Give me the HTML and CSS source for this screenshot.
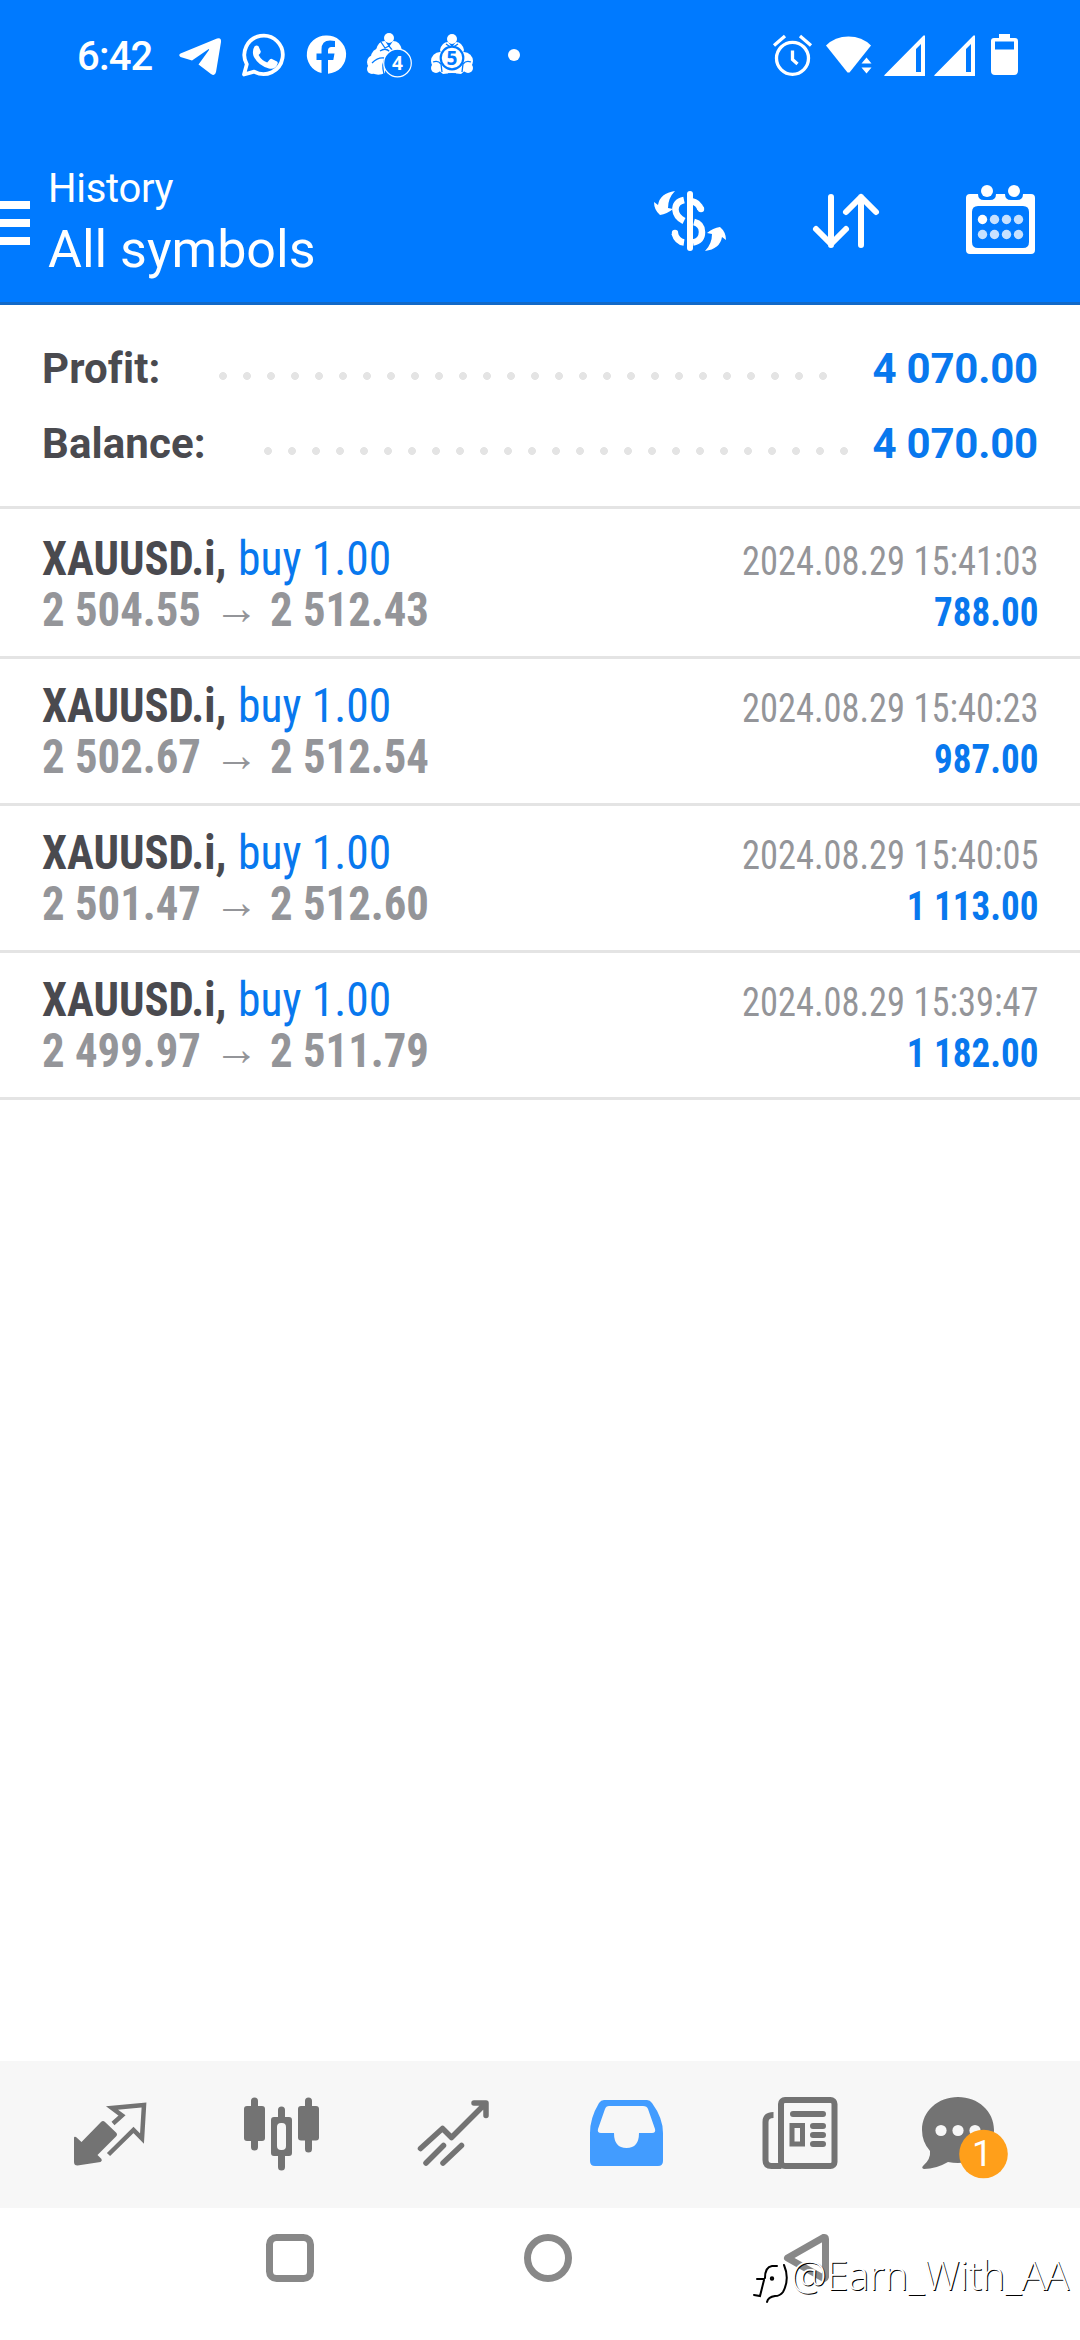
FILE: index.html
```html
<!DOCTYPE html>
<html lang="en">
<head>
<meta charset="utf-8">
<title>History</title>
<link rel="stylesheet" href="styles.css">
</head>
<body>
<header class="header">
  <div class="status">
    <span class="clock">6:42</span>
    <svg class="status-left" width="360" height="113" viewBox="170 0 360 113" fill="#fff">
      <path d="M180.500 53.500L217 38.500Q221.500 37 221 42L216 72Q215 76.500 211 74L198.500 64.500L209 50Q209.500 48.500 208 49.500L192 60.500L180.500 57Q178 55 180.500 53.500Z"/>
      <path d="M244 74.500l2.800-10.300a19.200 19.200 0 1 1 7.400 7.400z" fill="none" stroke="#fff" stroke-width="3.800" stroke-linejoin="round"/>
      <path d="M254.500 46.500q2-2 4-.2l2.300 5.200q.2 1.200-2.200 3.500q3 5.500 8.600 7.600l2.800-3.400q1-.8 2-.2l5 2.500q1 .6.600 2.200q-2 6-8.600 4.800q-11-3-15.500-12.500q-1.600-5.500 1-9.500z"/>
      <path d="M326 35.500a19 19 0 0 0-4.500 37.500V60h-5v-6.500h5v-4q0-9 8.500-9q3 0 5 .5v6h-3.500q-3.500 0-3.500 3.500v3h6.500l-1.200 6.500H328v13.700A19 19 0 0 0 326 35.500Z"/>
      <g>
        <circle cx="389" cy="38" r="5"/>
        <path d="M376 50q2-9 9-9l4 6 4-6q7 0 9 9l-2 7h-22z"/>
        <circle cx="380" cy="57" r="9"/><circle cx="374" cy="62" r="7"/><circle cx="372" cy="69" r="5"/>
        <path d="M371 58h14v15q-8 4-14-1z"/>
        <path d="M380 51q6-4 10 1M384 74q-3-10 2-17M381 42l4 6 4-2 4 5M372 63q6-6 12-5" fill="none" stroke="#007aff" stroke-width="1.300"/>
        <circle cx="397.500" cy="63" r="13.800" fill="#007aff" stroke="#fff" stroke-width="1.200"/>
        <text x="397.500" y="70" class="glyph">4</text>
      </g>
      <g>
        <circle cx="452" cy="39" r="5"/>
        <path d="M440 50q2-8 8-8l4 5 4-5q6 0 8 8l-3 9h-18z"/>
        <circle cx="440" cy="61" r="9"/><circle cx="464" cy="61" r="9"/>
        <circle cx="436" cy="68" r="5"/><circle cx="468" cy="68" r="5"/>
        <path d="M437 69l6 5 9-1 9 1 6-5-5-9h-20z"/>
        <path d="M433 62q5-2 8 2l1 8M471 62q-5-2-8 2l-1 8M446 44l6 4 6-4M448 74h8" fill="none" stroke="#007aff" stroke-width="1.300"/>
        <circle cx="452" cy="58" r="11.300" stroke="#007aff" stroke-width="2.200"/>
        <text x="452" y="65" class="glyph inverse">5</text>
      </g>
      <circle cx="514" cy="55" r="6"/>
    </svg>
    <svg class="status-right" width="260" height="113" viewBox="765 0 260 113" fill="#fff">
      <g fill="none" stroke="#fff" stroke-width="3.300">
        <circle cx="792.500" cy="58.300" r="16"/>
        <path d="M792.500 50.500v9l5 4.500M774 45.500l11-9.500M811 45.500l-11-9.500"/>
      </g>
      <path d="M826 45.500q9-9 22.500-9t22.500 9L849.500 72.500h-2z"/>
      <path d="M861.500 63.500l5-6 5 6zM861.500 67.500h10l-5 6z" stroke="#007aff" stroke-width="3"/>
      <path d="M861.500 63.500l5-6 5 6zM861.500 67.500h10l-5 6z"/>
      <path fill-rule="evenodd" d="M884 75.500L923.500 35.500h1.500v40.500H885zM916 49v23h5V44z"/>
      <path fill-rule="evenodd" d="M934 75.500L973.500 35.500h1.500v40.500H935zM966 49v23h5V44z"/>
      <path fill-rule="evenodd" d="M999 34h11v4h5q3 0 3 3v30q0 4-4 4h-19q-4 0-4-4v-30q0-3 3-3h5zM995 41.500v8h19v-8z"/>
    </svg>
  </div>
  <div class="toolbar">
    <div class="menu"><i></i><i></i><i></i></div>
    <div class="titles">
      <div class="subtitle">History</div>
      <h1 class="title">All symbols</h1>
    </div>
    <svg class="tools" width="430" height="189" viewBox="625 113 430 189" fill="none" stroke="#fff">
      <path d="M700.500 209.500q-1.500-7-9.500-8.500M684 200q-9 2-8.500 10q.5 7 8.500 11M694 222q8 2 8 10q0 9-9 10.500M684 242.500q-7-1-9.500-9.500" stroke-width="6.500" stroke-linecap="butt"/>
      <circle cx="701" cy="209" r="3.200" fill="#fff" stroke="none"/><circle cx="675" cy="233" r="3.200" fill="#fff" stroke="none"/>
      <path d="M690 194v54" stroke-width="6" stroke-linecap="round"/>
      <path d="M675 191q-15 2-17 14l-4-3q0 8 6 13q7-1 13-6l-5-1q0-10 7-17zM705 251q15-2 17-14l4 3q0-8-6-13q-7 1-13 6l5 1q0 10-7 17z" fill="#fff" stroke="none"/>
      <path d="M831 197v48M816 229l15 15 15-15M861 245v-48M846 212l15-15 15 15" stroke-width="6" stroke-linecap="round" stroke-linejoin="round"/>
      <g fill="#fff" stroke="none">
        <path fill-rule="evenodd" d="M970 194h8q0 6 6 6h6q6 0 6-6h9q0 6 6 6h6q6 0 6-6h8q4 0 4 4v52q0 4-4 4h-61q-4 0-4-4v-52q0-4 4-4zM978 206q-6 0-6 6v30q0 6 6 6h45q6 0 6-6v-30q0-6-6-6z"/>
        <circle cx="987" cy="191" r="6"/><circle cx="1014" cy="191" r="6"/>
        <circle cx="982.500" cy="219.500" r="4.700"/>
        <g opacity=".78"><circle cx="994.500" cy="219.500" r="4.700"/><circle cx="1006.500" cy="219.500" r="4.700"/><circle cx="1018.500" cy="219.500" r="4.700"/><circle cx="982.500" cy="234.500" r="4.700"/><circle cx="994.500" cy="234.500" r="4.700"/><circle cx="1006.500" cy="234.500" r="4.700"/><circle cx="1018.500" cy="234.500" r="4.700"/></g>
      </g>
    </svg>
  </div>
</header>

<section class="summary">
  <div class="line profit"><span class="label">Profit:</span><span class="leader"></span><span class="value">4 070.00</span></div>
  <div class="line balance"><span class="label">Balance:</span><span class="leader"></span><span class="value">4 070.00</span></div>
</section>

<main class="deals">
  <article class="deal">
    <div><div class="name"><b>XAUUSD.i,</b><span class="side">buy 1.00</span></div><div class="prices"><span class="open">2 504.55</span><span class="arrow">→</span><span class="close">2 512.43</span></div></div>
    <div class="result"><div class="date">2024.08.29 15:41:03</div><div class="amount">788.00</div></div>
  </article>
  <article class="deal">
    <div><div class="name"><b>XAUUSD.i,</b><span class="side">buy 1.00</span></div><div class="prices"><span class="open">2 502.67</span><span class="arrow">→</span><span class="close">2 512.54</span></div></div>
    <div class="result"><div class="date">2024.08.29 15:40:23</div><div class="amount">987.00</div></div>
  </article>
  <article class="deal">
    <div><div class="name"><b>XAUUSD.i,</b><span class="side">buy 1.00</span></div><div class="prices"><span class="open">2 501.47</span><span class="arrow">→</span><span class="close">2 512.60</span></div></div>
    <div class="result"><div class="date">2024.08.29 15:40:05</div><div class="amount">1 113.00</div></div>
  </article>
  <article class="deal">
    <div><div class="name"><b>XAUUSD.i,</b><span class="side">buy 1.00</span></div><div class="prices"><span class="open">2 499.97</span><span class="arrow">→</span><span class="close">2 511.79</span></div></div>
    <div class="result"><div class="date">2024.08.29 15:39:47</div><div class="amount">1 182.00</div></div>
  </article>
</main>

<nav class="tabs">
  <svg viewBox="24 2061 172 147" fill="#737373">
    <path d="M74 2138q0-2 2-1l5.500 5L101 2122q2-2 4 0l11 10.500q2 2 0 4L97.500 2155l4 4q1 2-1 3l-23 3.500q-3.500 0-3.500-3.500z"/>
    <path d="M113 2123.500l9-8-10-7.500 32-3-2 33.500-8.500-8.500-25 24.500" fill="none" stroke="#737373" stroke-width="4.500"/>
  </svg>
  <svg viewBox="196 2061 172 147" fill="#737373">
    <path d="M254.500 2101v46M308.500 2101v48M281.500 2110v12M281.500 2154v13" stroke="#737373" stroke-width="7" stroke-linecap="round"/>
    <rect x="244" y="2106" width="21" height="35" rx="3"/><rect x="298" y="2106" width="21" height="34.500" rx="3"/>
    <path fill="#f7f7f7" d="M276 2120h11v33h-11z"/>
    <path fill-rule="evenodd" d="M274 2117h15q3 0 3 3v33q0 3-3 3h-15q-3 0-3-3v-33q0-3 3-3zM281 2123q-4 0-4 4v19q0 4 4 4h1q4 0 4-4v-19q0-4-4-4z"/>
  </svg>
  <svg viewBox="368 2061 172 147" fill="none" stroke="#737373" stroke-width="5.500" stroke-linecap="round" stroke-linejoin="round">
    <path d="M420.500 2148.500L442.500 2128.500L451.500 2137.500L485 2104M474 2103h12v12.500"/>
    <path d="M426 2163L443.500 2145.500M443 2163L461.500 2145.500"/>
  </svg>
  <svg viewBox="540 2061 172 147">
    <path fill="#429cff" fill-rule="evenodd" d="M604 2100h43q3 0 5 3q11 15 11 30v28q0 5-5 5h-63q-5 0-5-5v-28q0-15 9-30q2-3 5-3zM609 2106q-3 0-4 3l-7 20q-1 4 3 4h13q0 15 12.500 15t12.500-15h13q4 0 3-4l-7-20q-1-3-5-3z"/>
  </svg>
  <svg viewBox="712 2061 172 147" fill="none" stroke="#737373" stroke-width="6">
    <rect x="781" y="2100" width="53.500" height="66" rx="4"/>
    <path d="M773.500 2115q-8 0-8 7v38q0 6 6 6h10"/>
    <path d="M793 2114h30M813 2126h10M813 2135h10M813 2144h10" stroke-linecap="round"/>
    <rect x="792" y="2125.500" width="10.500" height="18.500" stroke-width="5"/>
  </svg>
  <svg viewBox="884 2061 172 147">
    <path fill="#737373" d="M958 2097c20 0 36 14 36 33s-16 33-36 33q-5 0-10-1q-12 7-24 7q-3-1-1-3q8-7 7-15q-8-9-8-21c0-19 16-33 36-33z"/>
    <g fill="#f7f7f7"><circle cx="941" cy="2130.500" r="5.600"/><circle cx="958" cy="2130.500" r="5.600"/><circle cx="975" cy="2130.500" r="5.600"/></g>
    <circle cx="983.500" cy="2154" r="24.300" fill="#ff9f1a"/>
    <text x="982" y="2166" class="badge">1</text>
  </svg>
</nav>

<footer class="system">
  <svg width="1080" height="132" viewBox="0 2208 1080 132" fill="none" stroke="#888" stroke-width="7">
    <rect x="269.500" y="2237.500" width="41" height="41" rx="7"/>
    <circle cx="548" cy="2258" r="20.500"/>
    <path d="M787.500 2258L823.500 2237.500Q825.500 2237 825.500 2239V2277Q825 2279 823 2278Z" stroke-linejoin="round"/>
    <g class="mark">
      <path d="M777 2266h-5q-7 1-7 12M757 2279h7M764 2280l-4 16-6-1M784 2265q6 14-1 27q-3 4-8 4q-7 1-8 6"/>
      <circle cx="772" cy="2278.500" r="1.200"/>
    </g>
    <text x="791" y="2290" class="watermark">@Earn_With_AA</text>
  </svg>
</footer>
</body>
</html>
```
FILE: styles.css
```css
* { box-sizing: border-box; }
body {
  margin: 0;
  width: 1080px;
  height: 2340px;
  display: flex;
  flex-direction: column;
  overflow: hidden;
  background: #fff;
  font-family: Roboto, sans-serif;
}
svg { display: block; }

.header { height: 305px; background: #007aff; border-bottom: 3px solid #1269c8; color: #fff; }
.status { height: 113px; display: flex; align-items: center; padding: 0 55px 0 77px; }
.clock { width: 93px; font-size: 40px; line-height: 40px; font-weight: 500; letter-spacing: -.8px; }
.status-right { margin-left: auto; }
.glyph { font: bold 19px "Noto Sans", sans-serif; text-anchor: middle; fill: #fff; }
.inverse { fill: #007aff; }

.toolbar { height: 189px; display: flex; padding-right: 25px; }
.menu { width: 30px; padding-top: 88px; display: flex; flex-direction: column; gap: 10px; }
.menu i { height: 8px; background: #fff; }
.titles { padding: 50px 0 0 18px; }
.subtitle { font-size: 40px; line-height: 52px; letter-spacing: -.3px; }
.title { margin: 2px 0 0; font-size: 52px; line-height: 65px; font-weight: 400; }
.tools { margin-left: auto; }

.summary { padding: 26px 42px 25px; border-bottom: 3px solid #e4e4e4; }
.line { display: flex; height: 75px; font-size: 42px; line-height: 75px; font-weight: 700; }
.label { width: 169px; color: #4a4a4f; letter-spacing: .1px; }
.balance .label { width: 214px; }
.leader {
  width: 624px;
  height: 8px;
  margin-top: 41px;
  background: radial-gradient(circle at center, #e4e4e4 3.6px, transparent 4.2px) 0 0 / 24px 8px repeat-x;
}
.balance .leader { width: 600px; }
.value { margin-left: auto; color: #0878ee; white-space: nowrap; letter-spacing: -.2px; }

.deals { flex: 1; font-family: "Roboto Condensed", Roboto, sans-serif; }
.deal {
  display: flex;
  justify-content: space-between;
  padding: 21px 42px;
  border-bottom: 3px solid #e4e4e4;
  font-size: 48px;
  line-height: 51px;
  white-space: nowrap;
}
.deal:first-child { padding-top: 24px; }
.name, .prices { display: flex; height: 51px; }
.name b, .side, .open, .close, .arrow { transform: scaleX(.932); transform-origin: left; }
.name b { width: 196px; color: #4a4a4f; font-weight: 700; }
.side { color: #0878ee; transform: scaleX(.948); }
.prices { color: #949599; font-weight: 700; }
.open { width: 172px; }
.arrow { width: 56px; font-family: Roboto, sans-serif; font-weight: 500; line-height: 48px; }
.result { padding-top: 3px; height: 102px; text-align: right; font-size: 40px; }
.date { color: #949599; transform: scaleX(.911); transform-origin: right; }
.amount { color: #0878ee; font-weight: 700; transform: scaleX(.926); transform-origin: right; }

.tabs { height: 147px; display: flex; padding: 0 24px; background: #f7f7f7; }
.tabs svg { width: 172px; height: 147px; }
.badge { font: 36px Roboto, sans-serif; fill: #fff; text-anchor: middle; }

.system { height: 132px; }
.mark { stroke: #000; stroke-width: 2; stroke-linecap: round; }
.watermark { font: 300 40px "Open Sans", "Noto Sans", sans-serif; letter-spacing: -.2px; fill: #fff; stroke: none; text-shadow: 1px 1px 0 #000; }
```
